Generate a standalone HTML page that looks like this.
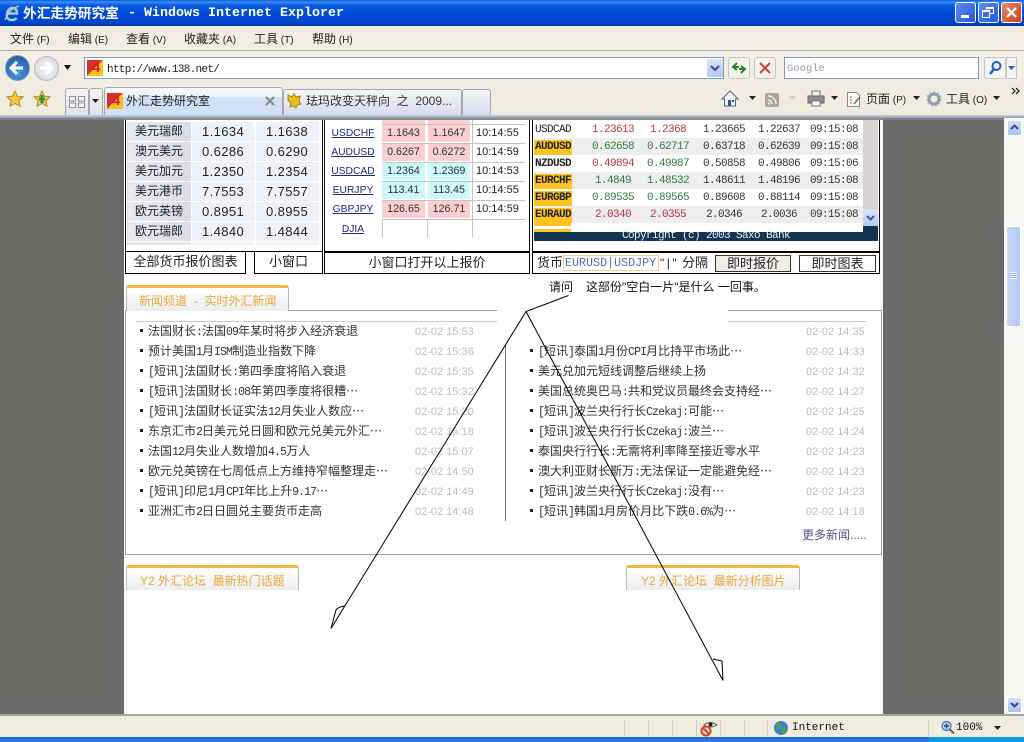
<!DOCTYPE html>
<html><head><meta charset="utf-8">
<style>
html,body{margin:0;padding:0;width:1024px;height:742px;overflow:hidden;background:#fff}
body{position:relative;font:12px "Liberation Sans","WenQuanYi Zen Hei","Noto Sans CJK SC",sans-serif;color:#222}
.a{position:absolute}
.t{position:absolute;white-space:nowrap;line-height:16px;height:16px}
.q{position:absolute;background:#eef2f8;height:19px}
.n{position:absolute;white-space:nowrap;line-height:16px;height:16px;font-family:"WenQuanYi Zen Hei","Noto Sans CJK SC",sans-serif;color:#333}
.n i{font:normal 11.5px/0 "Liberation Mono",monospace;letter-spacing:-.9px}
.n em{font:normal 12px/0 "Noto Sans CJK SC",sans-serif;display:inline-block;width:12px;text-align:center}
.d{position:absolute;white-space:nowrap;line-height:16px;color:#bdbdbd;font-size:11px}
.b{position:absolute;width:3px;height:3px;background:#222}
.m{position:absolute;white-space:nowrap;line-height:16px;font-family:"Liberation Mono",monospace;font-size:11px;letter-spacing:-.6px;text-align:center;width:56px;color:#333}
.r{color:#b2363c}.g{color:#2d7d3c}
.lk{position:absolute;white-space:nowrap;line-height:17px;color:#1a2a80;text-decoration:underline;width:56px;text-align:center;font-size:10.3px}
.cell{position:absolute;height:17px;line-height:17px;text-align:center;color:#333;font-size:10.7px}
.tm{position:absolute;white-space:nowrap;line-height:17px;font-size:11px;left:476px}
.sym{position:absolute;left:534px;width:37px;height:15px;font:bold 11px/15px "Liberation Mono",monospace;color:#222;padding-left:1px;letter-spacing:-.6px}
.bx{position:absolute;border:1px solid #000;box-sizing:border-box;text-align:center;background:#fff;white-space:nowrap;color:#222;font-size:13px;line-height:20px}
.tab{position:absolute;box-sizing:border-box;border:1px solid #b8b8b0;border-top:3px solid #f3b63e;border-bottom:0;border-radius:3px 3px 0 0;background:linear-gradient(#fff,#eceef0);color:#e6a838;white-space:nowrap}
</style></head><body>

<!-- page background -->
<div class="a" style="left:0;top:118px;width:1004px;height:597px;background:repeating-conic-gradient(#6f716e 0 25%,#656763 0 50%) 0 0/2px 2px"></div>
<div class="a" style="left:124px;top:118px;width:759px;height:597px;background:#fff"></div>
<div class="a" style="left:0;top:117px;width:1004px;height:3px;background:#7e8288"></div>
<div class="a" style="left:124px;top:118px;width:759px;height:2px;background:#8b8b88"></div>

<!-- left quote table -->
<div class="a" style="left:125px;top:120px;width:1px;height:153px;background:#111"></div>
<div class="a" style="left:322px;top:120px;width:1px;height:132px;background:#111"></div>
<div class="q" style="left:126px;top:122px;width:65px;background:linear-gradient(90deg,#e6eaf1,#d7dde8)"></div><div class="q" style="left:192px;top:122px;width:62px"></div><div class="q" style="left:256px;top:122px;width:63px"></div>
<div class="q" style="left:126px;top:142px;width:65px;background:linear-gradient(90deg,#e6eaf1,#d7dde8)"></div><div class="q" style="left:192px;top:142px;width:62px"></div><div class="q" style="left:256px;top:142px;width:63px"></div>
<div class="q" style="left:126px;top:162px;width:65px;background:linear-gradient(90deg,#e6eaf1,#d7dde8)"></div><div class="q" style="left:192px;top:162px;width:62px"></div><div class="q" style="left:256px;top:162px;width:63px"></div>
<div class="q" style="left:126px;top:182px;width:65px;background:linear-gradient(90deg,#e6eaf1,#d7dde8)"></div><div class="q" style="left:192px;top:182px;width:62px"></div><div class="q" style="left:256px;top:182px;width:63px"></div>
<div class="q" style="left:126px;top:202px;width:65px;background:linear-gradient(90deg,#e6eaf1,#d7dde8)"></div><div class="q" style="left:192px;top:202px;width:62px"></div><div class="q" style="left:256px;top:202px;width:63px"></div>
<div class="q" style="left:126px;top:222px;width:65px;background:linear-gradient(90deg,#e6eaf1,#d7dde8)"></div><div class="q" style="left:192px;top:222px;width:62px"></div><div class="q" style="left:256px;top:222px;width:63px"></div>
<div class="q" style="left:126px;top:242px;width:65px;height:3px;background:#e4e8ef"></div><div class="q" style="left:192px;top:242px;width:62px;height:3px"></div><div class="q" style="left:256px;top:242px;width:63px;height:3px"></div>

<div class="t" style="left:135px;top:123px">美元瑞郎</div><div class="t" style="left:202px;top:124px;font-size:13px;letter-spacing:.4px">1.1634</div><div class="t" style="left:266px;top:124px;font-size:13px;letter-spacing:.4px">1.1638</div>
<div class="t" style="left:135px;top:143px">澳元美元</div><div class="t" style="left:202px;top:144px;font-size:13px;letter-spacing:.4px">0.6286</div><div class="t" style="left:266px;top:144px;font-size:13px;letter-spacing:.4px">0.6290</div>
<div class="t" style="left:135px;top:163px">美元加元</div><div class="t" style="left:202px;top:164px;font-size:13px;letter-spacing:.4px">1.2350</div><div class="t" style="left:266px;top:164px;font-size:13px;letter-spacing:.4px">1.2354</div>
<div class="t" style="left:135px;top:183px">美元港币</div><div class="t" style="left:202px;top:184px;font-size:13px;letter-spacing:.4px">7.7553</div><div class="t" style="left:266px;top:184px;font-size:13px;letter-spacing:.4px">7.7557</div>
<div class="t" style="left:135px;top:203px">欧元英镑</div><div class="t" style="left:202px;top:204px;font-size:13px;letter-spacing:.4px">0.8951</div><div class="t" style="left:266px;top:204px;font-size:13px;letter-spacing:.4px">0.8955</div>
<div class="t" style="left:135px;top:223px">欧元瑞郎</div><div class="t" style="left:202px;top:224px;font-size:13px;letter-spacing:.4px">1.4840</div><div class="t" style="left:266px;top:224px;font-size:13px;letter-spacing:.4px">1.4844</div>

<!-- black band / buttons -->
<div class="a" style="left:125px;top:251px;width:198px;height:1px;background:#000"></div>
<div class="bx" style="left:125px;top:251px;width:121px;height:23px">全部货币报价图表</div>
<div class="bx" style="left:254px;top:251px;width:69px;height:23px">小窗口</div>

<!-- middle table -->
<div class="a" style="left:324px;top:120px;width:1px;height:154px;background:#111"></div>
<div class="a" style="left:529px;top:120px;width:1px;height:154px;background:#111"></div>
<div class="bx" style="left:324px;top:251px;width:206px;height:23px;border-top:2px solid #000">小窗口打开以上报价</div>
<div class="a" style="left:382px;top:120px;width:43px;height:4px;background:#fbcfcf"></div><div class="a" style="left:428px;top:120px;width:42px;height:4px;background:#fbcfcf"></div>

<div class="lk" style="left:325px;top:125px">USDCHF</div><div class="cell" style="left:382px;top:125px;width:43px;background:#fbcfcf">1.1643</div><div class="cell" style="left:428px;top:125px;width:42px;background:#fbcfcf">1.1647</div><div class="tm" style="top:125px">10:14:55</div>
<div class="lk" style="left:325px;top:144px">AUDUSD</div><div class="cell" style="left:382px;top:144px;width:43px;background:#fbcfcf">0.6267</div><div class="cell" style="left:428px;top:144px;width:42px;background:#fbcfcf">0.6272</div><div class="tm" style="top:144px">10:14:59</div>
<div class="lk" style="left:325px;top:163px">USDCAD</div><div class="cell" style="left:382px;top:163px;width:43px;background:#ccf8f8">1.2364</div><div class="cell" style="left:428px;top:163px;width:42px;background:#ccf8f8">1.2369</div><div class="tm" style="top:163px">10:14:53</div>
<div class="lk" style="left:325px;top:182px">EURJPY</div><div class="cell" style="left:382px;top:182px;width:43px;background:#ccf8f8">113.41</div><div class="cell" style="left:428px;top:182px;width:42px;background:#ccf8f8">113.45</div><div class="tm" style="top:182px">10:14:55</div>
<div class="lk" style="left:325px;top:201px">GBPJPY</div><div class="cell" style="left:382px;top:201px;width:43px;background:#fbcfcf">126.65</div><div class="cell" style="left:428px;top:201px;width:42px;background:#fbcfcf">126.71</div><div class="tm" style="top:201px">10:14:59</div>
<div class="lk" style="left:325px;top:221px">DJIA</div>
<!-- cell grid lines -->
<div class="a" style="left:382px;top:124px;width:143px;height:1px;background:#c4c4c4"></div>
<div class="a" style="left:382px;top:143px;width:143px;height:1px;background:#c4c4c4"></div>
<div class="a" style="left:382px;top:162px;width:143px;height:1px;background:#c4c4c4"></div>
<div class="a" style="left:382px;top:181px;width:143px;height:1px;background:#c4c4c4"></div>
<div class="a" style="left:382px;top:200px;width:143px;height:1px;background:#c4c4c4"></div>
<div class="a" style="left:382px;top:219px;width:143px;height:1px;background:#c4c4c4"></div>
<div class="a" style="left:382px;top:220px;width:1px;height:17px;background:#c4c4c4"></div>
<div class="a" style="left:427px;top:220px;width:1px;height:17px;background:#c4c4c4"></div>
<div class="a" style="left:472px;top:120px;width:1px;height:117px;background:#c4c4c4"></div>

<!-- right table -->
<div class="a" style="left:532px;top:120px;width:1px;height:154px;background:#111"></div>
<div class="a" style="left:879px;top:120px;width:1px;height:132px;background:#111"></div>
<div class="a" style="left:534px;top:120px;width:329px;height:112px;background:#fff"></div>
<div class="a" style="left:534px;top:138px;width:329px;height:17px;background:#eeeeee"></div>
<div class="a" style="left:534px;top:172px;width:329px;height:17px;background:#eeeeee"></div>
<div class="a" style="left:534px;top:206px;width:329px;height:17px;background:#eeeeee"></div>
<div class="a" style="left:863px;top:120px;width:15px;height:106px;background:#d6d3ce"></div>
<div class="a" style="left:534px;top:232px;width:344px;height:9px;background:#123552"></div>
<div class="a" style="left:863px;top:226px;width:15px;height:6px;background:#123552"></div>
<div class="a" style="left:863px;top:209px;width:15px;height:17px;background:linear-gradient(#dbe5fb,#b5c9f5)"></div>
<svg class="a" style="left:863px;top:209px" width="15" height="17"><path d="M4 7l3.5 3.5L11 7" fill="none" stroke="#3f5f95" stroke-width="2"/></svg>
<div class="t" style="left:534px;top:229px;width:344px;text-align:center;color:#e8eef2;font:11px/14px 'Liberation Mono',monospace;letter-spacing:-.6px">Copyright (c) 2003 Saxo Bank</div>
<div class="a" style="left:534px;top:223px;width:37px;height:3px;background:#fdc31f"></div>
<div class="a" style="left:534px;top:229px;width:37px;height:3px;background:#fdc31f"></div>

<div class="sym" style="top:123px;font-weight:normal">USDCAD</div>
<div class="m r" style="left:585px;top:122px">1.23613</div><div class="m r" style="left:640px;top:122px">1.2368</div><div class="m" style="left:696px;top:122px">1.23665</div><div class="m" style="left:751px;top:122px">1.22637</div><div class="m" style="left:806px;top:122px">09:15:08</div>
<div class="sym" style="top:140px;background:#fdc31f">AUDUSD</div>
<div class="m g" style="left:585px;top:139px">0.62658</div><div class="m g" style="left:640px;top:139px">0.62717</div><div class="m" style="left:696px;top:139px">0.63718</div><div class="m" style="left:751px;top:139px">0.62639</div><div class="m" style="left:806px;top:139px">09:15:08</div>
<div class="sym" style="top:157px">NZDUSD</div>
<div class="m r" style="left:585px;top:156px">0.49894</div><div class="m g" style="left:640px;top:156px">0.49987</div><div class="m" style="left:696px;top:156px">0.50858</div><div class="m" style="left:751px;top:156px">0.49806</div><div class="m" style="left:806px;top:156px">09:15:06</div>
<div class="sym" style="top:174px;background:#fdc31f">EURCHF</div>
<div class="m g" style="left:585px;top:173px">1.4849</div><div class="m g" style="left:640px;top:173px">1.48532</div><div class="m" style="left:696px;top:173px">1.48611</div><div class="m" style="left:751px;top:173px">1.48196</div><div class="m" style="left:806px;top:173px">09:15:08</div>
<div class="sym" style="top:191px;background:#fdc31f">EURGBP</div>
<div class="m g" style="left:585px;top:190px">0.89535</div><div class="m g" style="left:640px;top:190px">0.89565</div><div class="m" style="left:696px;top:190px">0.89608</div><div class="m" style="left:751px;top:190px">0.88114</div><div class="m" style="left:806px;top:190px">09:15:08</div>
<div class="sym" style="top:208px;background:#fdc31f">EURAUD</div>
<div class="m r" style="left:585px;top:207px">2.0340</div><div class="m r" style="left:640px;top:207px">2.0355</div><div class="m" style="left:696px;top:207px">2.0346</div><div class="m" style="left:751px;top:207px">2.0036</div><div class="m" style="left:806px;top:207px">09:15:08</div>

<!-- right bottom form -->
<div class="a" style="left:532px;top:251px;width:348px;height:23px;border:1px solid #000;border-top:2px solid #000;box-sizing:border-box;background:#fff"></div>
<div class="t" style="left:537px;top:255px;font-size:13px">货币</div>
<div class="a" style="left:563px;top:255px;width:96px;height:16px;border:1px solid #f0cf90;box-sizing:border-box"></div>
<div class="t" style="left:565px;top:255px;font-family:'Liberation Mono',monospace;color:#4a72a8;font-size:11.7px">EURUSD|USDJPY</div>
<div class="t" style="left:660px;top:255px;font-size:12px;letter-spacing:2.5px">"|"</div>
<div class="t" style="left:682px;top:255px;font-size:13px">分隔</div>
<div class="bx" style="left:715px;top:255px;width:76px;height:17px;background:#f0ede4;line-height:15px;border-color:#333">即时报价</div>
<div class="bx" style="left:799px;top:255px;width:77px;height:17px;line-height:15px;border-color:#333">即时图表</div>

<!-- news box -->
<div class="a" style="left:125px;top:310px;width:372px;height:1px;background:#9aa6ac"></div>
<div class="a" style="left:728px;top:310px;width:154px;height:1px;background:#9aa6ac"></div>
<div class="a" style="left:125px;top:310px;width:1px;height:245px;background:#a0a0a0"></div>
<div class="a" style="left:881px;top:310px;width:1px;height:245px;background:#a0a0a0"></div>
<div class="a" style="left:125px;top:554px;width:757px;height:1px;background:#a0a0a0"></div>
<div class="a" style="left:136px;top:321px;width:361px;height:1px;background:#ccc"></div>
<div class="a" style="left:728px;top:321px;width:138px;height:1px;background:#ccc"></div>
<div class="tab" style="left:126px;top:285px;width:163px;height:26px;padding-left:12px;line-height:26px">新闻频道&nbsp; -&nbsp; 实时外汇新闻</div>

<div class="b" style="left:140px;top:329px"></div><div class="n" style="left:148px;top:323px">法国财长<i>:</i>法国<i>09</i>年某时将步入经济衰退</div><div class="d" style="left:415px;top:324px">02-02 15:53</div>
<div class="b" style="left:140px;top:349px"></div><div class="n" style="left:148px;top:343px">预计美国<i>1</i>月<i>ISM</i>制造业指数下降</div><div class="d" style="left:415px;top:344px">02-02 15:36</div>
<div class="b" style="left:140px;top:369px"></div><div class="n" style="left:148px;top:363px"><i>[</i>短讯<i>]</i>法国财长<i>:</i>第四季度将陷入衰退</div><div class="d" style="left:415px;top:364px">02-02 15:35</div>
<div class="b" style="left:140px;top:389px"></div><div class="n" style="left:148px;top:383px"><i>[</i>短讯<i>]</i>法国财长<i>:08</i>年第四季度将很糟<em>…</em></div><div class="d" style="left:415px;top:384px">02-02 15:32</div>
<div class="b" style="left:140px;top:409px"></div><div class="n" style="left:148px;top:403px"><i>[</i>短讯<i>]</i>法国财长证实法<i>12</i>月失业人数应<em>…</em></div><div class="d" style="left:415px;top:404px">02-02 15:20</div>
<div class="b" style="left:140px;top:429px"></div><div class="n" style="left:148px;top:423px">东京汇市<i>2</i>日美元兑日圆和欧元兑美元外汇<em>…</em></div><div class="d" style="left:415px;top:424px">02-02 15:18</div>
<div class="b" style="left:140px;top:449px"></div><div class="n" style="left:148px;top:443px">法国<i>12</i>月失业人数增加<i>4.5</i>万人</div><div class="d" style="left:415px;top:444px">02-02 15:07</div>
<div class="b" style="left:140px;top:469px"></div><div class="n" style="left:148px;top:463px">欧元兑英镑在七周低点上方维持窄幅整理走<em>…</em></div><div class="d" style="left:415px;top:464px">02-02 14:50</div>
<div class="b" style="left:140px;top:489px"></div><div class="n" style="left:148px;top:483px"><i>[</i>短讯<i>]</i>印尼<i>1</i>月<i>CPI</i>年比上升<i>9.17</i><em>…</em></div><div class="d" style="left:415px;top:484px">02-02 14:49</div>
<div class="b" style="left:140px;top:509px"></div><div class="n" style="left:148px;top:503px">亚洲汇市<i>2</i>日日圆兑主要货币走高</div><div class="d" style="left:415px;top:504px">02-02 14:48</div>

<div class="d" style="left:806px;top:324px">02-02 14:35</div>
<div class="b" style="left:530px;top:349px"></div><div class="n" style="left:538px;top:343px"><i>[</i>短讯<i>]</i>泰国<i>1</i>月份<i>CPI</i>月比持平市场此<em>…</em></div><div class="d" style="left:806px;top:344px">02-02 14:33</div>
<div class="b" style="left:530px;top:369px"></div><div class="n" style="left:538px;top:363px">美元兑加元短线调整后继续上扬</div><div class="d" style="left:806px;top:364px">02-02 14:32</div>
<div class="b" style="left:530px;top:389px"></div><div class="n" style="left:538px;top:383px">美国总统奥巴马<i>:</i>共和党议员最终会支持经<em>…</em></div><div class="d" style="left:806px;top:384px">02-02 14:27</div>
<div class="b" style="left:530px;top:409px"></div><div class="n" style="left:538px;top:403px"><i>[</i>短讯<i>]</i>波兰央行行长<i>Czekaj:</i>可能<em>…</em></div><div class="d" style="left:806px;top:404px">02-02 14:25</div>
<div class="b" style="left:530px;top:429px"></div><div class="n" style="left:538px;top:423px"><i>[</i>短讯<i>]</i>波兰央行行长<i>Czekaj:</i>波兰<em>…</em></div><div class="d" style="left:806px;top:424px">02-02 14:24</div>
<div class="b" style="left:530px;top:449px"></div><div class="n" style="left:538px;top:443px">泰国央行行长<i>:</i>无需将利率降至接近零水平</div><div class="d" style="left:806px;top:444px">02-02 14:23</div>
<div class="b" style="left:530px;top:469px"></div><div class="n" style="left:538px;top:463px">澳大利亚财长斯万<i>:</i>无法保证一定能避免经<em>…</em></div><div class="d" style="left:806px;top:464px">02-02 14:23</div>
<div class="b" style="left:530px;top:489px"></div><div class="n" style="left:538px;top:483px"><i>[</i>短讯<i>]</i>波兰央行行长<i>Czekaj:</i>没有<em>…</em></div><div class="d" style="left:806px;top:484px">02-02 14:23</div>
<div class="b" style="left:530px;top:509px"></div><div class="n" style="left:538px;top:503px"><i>[</i>短讯<i>]</i>韩国<i>1</i>月房价月比下跌<i>0.6%</i>为<em>…</em></div><div class="d" style="left:806px;top:504px">02-02 14:18</div>
<div class="t" style="left:802px;top:527px;color:#4a5a80">更多新闻.....</div>

<div class="tab" style="left:126px;top:565px;width:173px;height:25px;padding-left:13px;line-height:27px">Y2 外汇论坛&nbsp; 最新热门话题</div>
<div class="tab" style="left:626px;top:565px;width:174px;height:25px;padding-left:14px;line-height:27px">Y2 外汇论坛&nbsp; 最新分析图片</div>

<!-- annotation -->
<div class="t" style="left:549px;top:279px;color:#111">请问</div>
<div class="t" style="left:586px;top:279px;color:#111;font-size:12px">这部份"空白一片"是什么 一回事。</div>
<svg class="a" style="left:0;top:0" width="1024" height="742">
<path d="M505.5 345V521" fill="none" stroke="#777" stroke-width="1"/>
<path d="M568.5 295.5L526 311.5L331 628.5L336 610Q338 607 345 606M526 311.5L723 680.5L722 661L713 659" fill="none" stroke="#000" stroke-width="1"/>
</svg>

<!-- scrollbar -->
<div class="a" style="left:1004px;top:118px;width:20px;height:597px;background:#f8f7f1"></div>
<div class="a" style="left:1007px;top:120px;width:15px;height:16px;background:linear-gradient(#d4e0fa,#aac2f4);border:1px solid #fff;border-radius:2px;box-sizing:border-box"></div>
<svg class="a" style="left:1007px;top:120px" width="15" height="16"><path d="M4 9l3.5-3.5L11 9" fill="none" stroke="#34507f" stroke-width="2"/></svg>
<div class="a" style="left:1006px;top:226px;width:15px;height:101px;background:linear-gradient(90deg,#c6d6f8,#b6c9f3);border:1px solid #fff;border-radius:2px;box-sizing:border-box"></div>
<div class="a" style="left:1010px;top:272px;width:7px;height:7px;background:repeating-linear-gradient(#f0f4ff 0 1px,#9fb4e2 1px 2px)"></div>
<div class="a" style="left:1007px;top:697px;width:15px;height:16px;background:linear-gradient(#d4e0fa,#aac2f4);border:1px solid #fff;border-radius:2px;box-sizing:border-box"></div>
<svg class="a" style="left:1007px;top:697px" width="15" height="16"><path d="M4 6l3.5 3.5L11 6" fill="none" stroke="#34507f" stroke-width="2"/></svg>

<!-- title bar -->
<div class="a" style="left:0;top:0;width:1024px;height:26px;background:linear-gradient(#0a5ae0 0,#3c8ef5 2px,#0a5ee2 5px,#0048d8 14px,#0046cc 22px,#0038a8 26px)"></div>
<div class="t" style="left:23px;top:6px;color:#fff;font-size:13.7px;font-weight:bold">外汇走势研究室</div>
<div class="t" style="left:128px;top:6px;color:#fff;font:bold 13.33px/16px 'Liberation Mono',monospace">- Windows Internet Explorer</div>
<svg class="a" style="left:3px;top:4px" width="18" height="18"><path d="M5 9.5h9Q14 4 9.5 4T4 10t5 6q3 0 4.5-2" fill="none" stroke="#9cd0f4" stroke-width="2.4"/><path d="M2 16Q6 5 16 2" fill="none" stroke="#e8c860" stroke-width="1.2"/></svg>
<div class="a" style="left:955px;top:2px;width:21px;height:21px;border:1px solid #fff;border-radius:3px;box-sizing:border-box;background:linear-gradient(135deg,#5b8df0,#2558d8)"></div>
<div class="a" style="left:961px;top:15px;width:8px;height:3px;background:#fff"></div>
<div class="a" style="left:978px;top:2px;width:21px;height:21px;border:1px solid #fff;border-radius:3px;box-sizing:border-box;background:linear-gradient(135deg,#5b8df0,#2558d8)"></div>
<div class="a" style="left:986px;top:7px;width:8px;height:7px;border:1px solid #fff;border-top-width:2px;box-sizing:border-box"></div>
<div class="a" style="left:982px;top:10px;width:8px;height:8px;border:1px solid #fff;border-top-width:2px;box-sizing:border-box;background:#3d70e0"></div>
<div class="a" style="left:1001px;top:2px;width:21px;height:21px;border:1px solid #fff;border-radius:3px;box-sizing:border-box;background:linear-gradient(135deg,#e88a6c,#c8401c)"></div>
<svg class="a" style="left:1001px;top:2px" width="21" height="21"><path d="M6 6l9 9M15 6l-9 9" stroke="#fff" stroke-width="2.4" fill="none"/></svg>

<!-- menu bar -->
<div class="a" style="left:0;top:26px;width:1024px;height:25px;background:#f1ede3"></div>
<div class="a" style="left:0;top:50px;width:1024px;height:1px;background:#a8a8a4"></div>
<div class="t" style="left:10px;top:31px">文件<span style="font-size:10px"> (F)</span></div>
<div class="t" style="left:68px;top:31px">编辑<span style="font-size:10px"> (E)</span></div>
<div class="t" style="left:126px;top:31px">查看<span style="font-size:10px"> (V)</span></div>
<div class="t" style="left:184px;top:31px">收藏夹<span style="font-size:10px"> (A)</span></div>
<div class="t" style="left:254px;top:31px">工具<span style="font-size:10px"> (T)</span></div>
<div class="t" style="left:312px;top:31px">帮助<span style="font-size:10px"> (H)</span></div>

<!-- address row -->
<div class="a" style="left:0;top:51px;width:1024px;height:66px;background:linear-gradient(#f3efe6,#eeeadd)"></div>
<div class="a" style="left:34px;top:56px;width:25px;height:25px;border-radius:50%;background:radial-gradient(#f6f6f6,#d0d4dc);border:1px solid #b8bcc4;box-sizing:border-box"></div>
<svg class="a" style="left:35px;top:57px" width="22" height="22"><path d="M5 11h12M11 5l6 6-6 6" fill="none" stroke="#fff" stroke-width="3"/></svg>
<div class="a" style="left:5px;top:55px;width:25px;height:26px;border-radius:50%;background:radial-gradient(circle at 50% 70%,#4a9ae8,#1f4c9c);border:1px solid #8ca0c0;box-sizing:border-box"></div>
<svg class="a" style="left:6px;top:57px" width="22" height="22"><path d="M17 11H5M11 5l-6 6 6 6" fill="none" stroke="#fff" stroke-width="3"/></svg>
<svg class="a" style="left:63px;top:65px" width="9" height="6"><path d="M1 0h7L4.5 5z" fill="#111"/></svg>
<div class="a" style="left:84px;top:57px;width:640px;height:22px;background:#fff;border:1px solid #7f9db9;box-sizing:border-box"></div>
<div class="a" style="left:87px;top:60px;width:16px;height:16px;background:linear-gradient(135deg,#d83030 50%,#f8c020 50%)"></div>
<div class="t" style="left:92px;top:59px;font:bold 15px/18px 'Liberation Sans',sans-serif;color:#d82020">4</div>
<div class="t" style="left:107px;top:62px;font:11px/16px 'Liberation Mono',monospace;letter-spacing:-.7px;color:#222">http://www.138.net/</div>
<div class="a" style="left:707px;top:59px;width:16px;height:18px;background:linear-gradient(#d8e4fa,#b4c8f0)"></div>
<svg class="a" style="left:707px;top:60px" width="16" height="16"><path d="M4 6l4 4 4-4" fill="none" stroke="#3c4f80" stroke-width="2"/></svg>
<div class="a" style="left:728px;top:57px;width:22px;height:22px;background:#f4f2ec;border:1px solid #c6c6c0;border-radius:3px;box-sizing:border-box"></div>
<svg class="a" style="left:728px;top:57px" width="22" height="22"><path d="M11 10H6M9 6l-4 4 4 3M11 12h5M13 16l4-4-4-3" fill="none" stroke="#2a8030" stroke-width="2"/></svg>
<div class="a" style="left:754px;top:57px;width:22px;height:22px;background:#f4f2ec;border:1px solid #c6c6c0;border-radius:3px;box-sizing:border-box"></div>
<svg class="a" style="left:754px;top:57px" width="22" height="22"><path d="M6 6l10 10M16 6L6 16" stroke="#c84038" stroke-width="2"/></svg>
<div class="a" style="left:784px;top:57px;width:195px;height:22px;background:#fff;border:1px solid #7f9db9;box-sizing:border-box"></div>
<div class="t" style="left:787px;top:61px;font:10.5px/16px 'Liberation Mono',monospace;color:#999">Google</div>
<div class="a" style="left:984px;top:57px;width:22px;height:22px;background:#f2f4f8;border:1px solid #c6c6c0;border-radius:3px;box-sizing:border-box"></div>
<svg class="a" style="left:984px;top:57px" width="22" height="22"><circle cx="12.5" cy="9" r="4" fill="none" stroke="#2060c0" stroke-width="2"/><path d="M10 12l-4 5" stroke="#2060c0" stroke-width="2.5"/></svg>
<div class="a" style="left:1006px;top:57px;width:11px;height:22px;background:#f2f4f8;border:1px solid #c6c6c0;box-sizing:border-box"></div>
<svg class="a" style="left:1008px;top:66px" width="7" height="5"><path d="M0 0h7L3.5 4z" fill="#3c5f9c"/></svg>

<!-- tab row -->
<svg class="a" style="left:6px;top:90px" width="18" height="18"><path d="M9 1l2.4 5.2 5.6.6-4.2 3.8 1.2 5.6L9 13.4 4 16.2l1.2-5.6L1 6.8l5.6-.6z" fill="#fbc840" stroke="#b8862a"/></svg>
<svg class="a" style="left:33px;top:90px" width="18" height="18"><path d="M9 1l2.4 5.2 5.6.6-4.2 3.8 1.2 5.6L9 13.4 4 16.2l1.2-5.6L1 6.8l5.6-.6z" fill="#fbc840" stroke="#b8862a"/><path d="M6 9h6M9 5v8" stroke="#20a030" stroke-width="3"/></svg>
<div class="a" style="left:65px;top:88px;width:24px;height:27px;border:1px solid #a8a8b0;border-bottom:0;border-radius:3px 3px 0 0;box-sizing:border-box;background:linear-gradient(#f4f4f0,#dfe3ec)"></div>
<svg class="a" style="left:68px;top:95px" width="18" height="14"><path d="M1.5 1.5h6v4.5h-6zM10.5 1.5h6v4.5h-6zM1.5 8h6v4.5h-6zM10.5 8h6v4.5h-6z" fill="#fff" stroke="#8a8a90"/></svg>
<div class="a" style="left:89px;top:88px;width:14px;height:27px;border:1px solid #a8a8b0;border-bottom:0;border-radius:3px 3px 0 0;box-sizing:border-box;background:linear-gradient(#f4f4f0,#dfe3ec)"></div>
<svg class="a" style="left:92px;top:99px" width="7" height="5"><path d="M0 0h7L3.5 4z" fill="#222"/></svg>
<div class="a" style="left:283px;top:89px;width:179px;height:26px;border:1px solid #a8a8b0;border-bottom:0;border-radius:3px 3px 0 0;box-sizing:border-box;background:linear-gradient(#f4f6f8,#d6deec)"></div>
<div class="a" style="left:462px;top:89px;width:29px;height:26px;border:1px solid #a8a8b0;border-bottom:0;border-radius:3px 3px 0 0;box-sizing:border-box;background:linear-gradient(#f4f6f8,#d6deec)"></div>
<div class="a" style="left:104px;top:87px;width:179px;height:30px;border:1px solid #a8a8b0;border-bottom:0;border-radius:3px 3px 0 0;box-sizing:border-box;background:linear-gradient(#f6f8fb 0,#eef3f9 30%,#cfe0f6 32%,#d2e2f6 100%)"></div>
<div class="a" style="left:107px;top:93px;width:16px;height:16px;background:linear-gradient(135deg,#d83030 50%,#f8c020 50%)"></div>
<div class="t" style="left:112px;top:92px;font:bold 15px/18px 'Liberation Sans',sans-serif;color:#d82020">4</div>
<div class="t" style="left:126px;top:93px">外汇走势研究室</div>
<svg class="a" style="left:265px;top:96px" width="10" height="10"><path d="M1 1l8 8M9 1L1 9" stroke="#888" stroke-width="2"/></svg>
<svg class="a" style="left:286px;top:93px" width="16" height="16"><path d="M2 2l4 2 2-3 2 3 4-1-1 5 2 3-4 1-1 3-3-2-3 1 1-4-3-3z" fill="#e8c020" stroke="#a88010"/></svg>
<div class="t" style="left:306px;top:93px;color:#333">珐玛改变天秤向&nbsp; 之&nbsp; 2009...</div>
<div class="a" style="left:0;top:115px;width:1024px;height:3px;background:linear-gradient(#c2d4ee,#8e9aa8)"></div>

<!-- command icons -->
<svg class="a" style="left:721px;top:90px" width="18" height="18"><path d="M9 1L1 9h2.5v7h11V9H17z" fill="#f2f0e8" stroke="#506890"/><path d="M7 10h3v6H7z" fill="#2f4f9c"/><path d="M11 10h2v2h-2z" fill="#2f4f9c"/></svg>
<svg class="a" style="left:749px;top:96px" width="7" height="5"><path d="M0 0h7L3.5 4z" fill="#222"/></svg>
<div class="a" style="left:765px;top:93px;width:14px;height:14px;background:#aaa69a;border-radius:2px"></div>
<svg class="a" style="left:765px;top:93px" width="14" height="14"><path d="M3 3a8 8 0 0 1 8 8M3 7a4 4 0 0 1 4 4" fill="none" stroke="#eee" stroke-width="1.5"/><circle cx="4" cy="10.5" r="1.2" fill="#eee"/></svg>
<svg class="a" style="left:789px;top:96px" width="7" height="5"><path d="M0 0h7L3.5 4z" fill="#ccc"/></svg>
<svg class="a" style="left:807px;top:90px" width="18" height="18"><path d="M5 1h8v5H5z" fill="#f4f4f4" stroke="#777"/><path d="M1 6h16v7H1z" fill="#8a8e92" stroke="#666"/><path d="M5 11h8v5H5z" fill="#fff" stroke="#777"/></svg>
<svg class="a" style="left:831px;top:96px" width="7" height="5"><path d="M0 0h7L3.5 4z" fill="#222"/></svg>
<svg class="a" style="left:846px;top:91px" width="17" height="17"><path d="M1.5 1.5h9l3 3v11h-12z" fill="#fdfdfb" stroke="#8a8a90"/><path d="M4 6h2M4 9h2M4 12h2" stroke="#c04040"/><path d="M8 13l6-7" stroke="#5a7a40" stroke-width="1.5"/></svg>
<div class="t" style="left:866px;top:91px">页面<span style="font-size:10px"> (P)</span></div>
<svg class="a" style="left:913px;top:96px" width="7" height="5"><path d="M0 0h7L3.5 4z" fill="#222"/></svg>
<svg class="a" style="left:926px;top:91px" width="16" height="16"><circle cx="8" cy="8" r="5" fill="none" stroke="#8ea0b0" stroke-width="3"/><circle cx="8" cy="8" r="7" fill="none" stroke="#a8b4c0" stroke-width="1.5" stroke-dasharray="2 2"/></svg>
<div class="t" style="left:946px;top:91px">工具<span style="font-size:10px"> (O)</span></div>
<svg class="a" style="left:993px;top:96px" width="7" height="5"><path d="M0 0h7L3.5 4z" fill="#222"/></svg>
<svg class="a" style="left:1011px;top:87px" width="10" height="8"><path d="M1 1l3 3-3 3M5 1l3 3-3 3" fill="none" stroke="#111" stroke-width="1.2"/></svg>

<!-- status bar -->
<div class="a" style="left:0;top:715px;width:1024px;height:22px;background:#efebde;border-top:1px solid #d8d4c8;box-sizing:border-box"></div>
<div class="a" style="left:0;top:714px;width:1024px;height:2px;background:#a6a6a0"></div>
<div class="a" style="left:624px;top:720px;width:1px;height:16px;background:#d0ccc0"></div>
<div class="a" style="left:648px;top:720px;width:1px;height:16px;background:#d0ccc0"></div>
<div class="a" style="left:672px;top:720px;width:1px;height:16px;background:#d0ccc0"></div>
<div class="a" style="left:696px;top:720px;width:1px;height:16px;background:#d0ccc0"></div>
<div class="a" style="left:720px;top:720px;width:1px;height:16px;background:#d0ccc0"></div>
<div class="a" style="left:744px;top:720px;width:1px;height:16px;background:#d0ccc0"></div>
<div class="a" style="left:767px;top:720px;width:1px;height:16px;background:#d0ccc0"></div>
<div class="a" style="left:928px;top:720px;width:1px;height:16px;background:#d0ccc0"></div>
<svg class="a" style="left:700px;top:720px" width="18" height="17"><path d="M4 5Q10 0 17 5Q10 9 4 5z" fill="#eee" stroke="#555"/><circle cx="10.5" cy="4.5" r="2" fill="#222"/><circle cx="6" cy="11" r="4.5" fill="none" stroke="#d84020" stroke-width="2"/><path d="M3 8l6 6" stroke="#d84020" stroke-width="2"/></svg>
<svg class="a" style="left:773px;top:720px" width="16" height="16"><circle cx="8" cy="8" r="7" fill="#3a80c8"/><path d="M3 5q3-3 5-1t-1 4-3-1zM9 9q4-2 5 0t-3 4-2-4z" fill="#50a040"/></svg>
<div class="t" style="left:792px;top:720px;font:11px/16px 'Liberation Mono',monospace;color:#111">Internet</div>
<svg class="a" style="left:940px;top:720px" width="16" height="16"><circle cx="6.5" cy="6" r="4.5" fill="#bcd4f0" stroke="#3a70b0" stroke-width="1.2"/><path d="M4 6h5M6.5 3.5v5" stroke="#1a4a90" stroke-width="1.4"/><path d="M10 9.5l4 4" stroke="#806040" stroke-width="2"/></svg>
<div class="t" style="left:956px;top:720px;font:11px/16px 'Liberation Mono',monospace;color:#111">100%</div>
<svg class="a" style="left:994px;top:726px" width="7" height="5"><path d="M0 0h7L3.5 4z" fill="#222"/></svg>

<!-- taskbar sliver -->
<div class="a" style="left:0;top:737px;width:1024px;height:5px;background:linear-gradient(#1c5ed8,#3a82ea)"></div>
<div class="a" style="left:929px;top:737px;width:95px;height:5px;background:#1098e8"></div>
</body></html>
